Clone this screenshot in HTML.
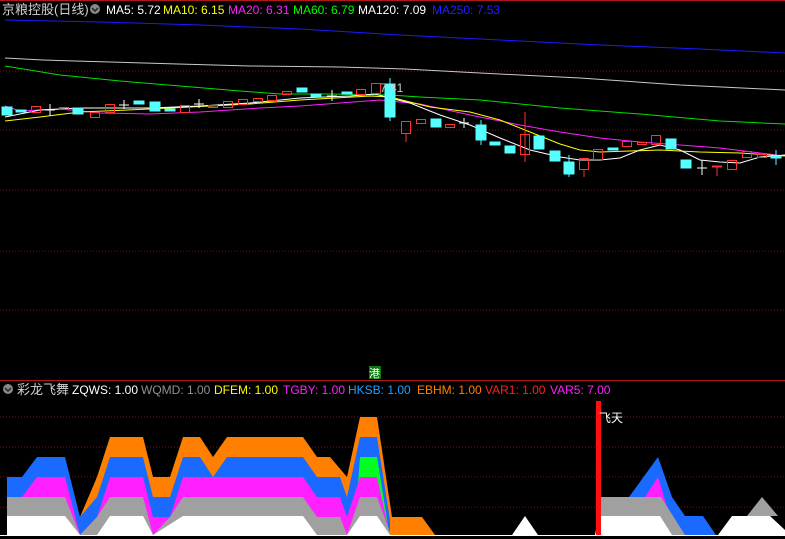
<!DOCTYPE html>
<html><head><meta charset="utf-8"><style>
html,body{margin:0;padding:0;background:#000;width:785px;height:539px;overflow:hidden}
svg{display:block}
text{font-family:"Liberation Sans","Noto Sans CJK SC",sans-serif;font-size:12px}
</style></head><body>
<svg width="785" height="539" viewBox="0 0 785 539" xmlns="http://www.w3.org/2000/svg">
<rect width="785" height="539" fill="#000"/>
<g stroke="#7a1010" stroke-width="1" stroke-dasharray="1,2">
<line x1="0" y1="71" x2="785" y2="71"/><line x1="0" y1="130" x2="785" y2="130"/>
<line x1="0" y1="190" x2="785" y2="190"/><line x1="0" y1="251" x2="785" y2="251"/>
<line x1="0" y1="310" x2="785" y2="310"/>
<line x1="0" y1="417" x2="785" y2="417"/><line x1="0" y1="447" x2="785" y2="447"/>
<line x1="0" y1="477" x2="785" y2="477"/><line x1="0" y1="507" x2="785" y2="507"/>
</g>
<line x1="0" y1="380.5" x2="785" y2="380.5" stroke="#b01818"/>
<line x1="0" y1="0.5" x2="785" y2="0.5" stroke="#b01818"/>
<g fill="none" stroke-width="1">
<polyline stroke="#1a1aff" points="5,20 100,22 200,25 300,29 400,35 500,40 600,45 700,49 785,53"/>
<polyline stroke="#c8c8c8" points="5,58 43,60 75,61 178,64 250,66 340,67 405,69 480,73 580,78 680,85 785,90"/>
<polyline stroke="#00e000" points="5,66 60,75 120,81 180,86 240,91 280,94 330,94 390,95 420,97 480,100 560,108 640,114 720,121 785,124"/>
<polyline stroke="#ff20ff" points="5,106 20,111 60,109 100,113 150,114 200,112 260,108 300,106 380,100 420,104 470,115 520,125 560,132 600,138 640,142 680,145 720,148 760,153 785,156"/>
<polyline stroke="#ffff00" points="5,121 40,117 80,112 150,109 250,104 300,100 370,96 390,97 430,107 470,112 500,120 530,132 560,144 580,150 600,152 630,151 660,150 700,152 740,153 785,156"/>
<polyline stroke="#ffffff" points="5,117 20,114 40,110 80,108 150,108 200,106 250,103 300,98 350,96 375,94 390,98 410,103 440,115 470,125 500,138 530,150 560,157 580,160 600,160 620,158 640,150 660,145 680,150 700,160 720,162 740,163 760,157 785,155"/>
</g>
<g stroke-width="1">
<!-- candles: cyan filled, red hollow -->
<g fill="#55ffff" stroke="#55ffff">
<rect x="2" y="107" width="10" height="8"/><rect x="16" y="110" width="10" height="2"/>
<rect x="73" y="108" width="10" height="6"/><rect x="134" y="101" width="10" height="3"/>
<rect x="150" y="102" width="10" height="9"/><rect x="165" y="109" width="10" height="2"/>
<rect x="297" y="88" width="10" height="4"/><rect x="311" y="94" width="10" height="3"/>
<rect x="342" y="92" width="10" height="2"/><rect x="385" y="84" width="10" height="33"/>
<rect x="431" y="119" width="10" height="8"/><rect x="476" y="125" width="10" height="15"/>
<rect x="490" y="142" width="10" height="3"/><rect x="505" y="146" width="10" height="7"/>
<rect x="534" y="136" width="10" height="13"/><rect x="550" y="151" width="10" height="10"/>
<rect x="564" y="162" width="10" height="12"/><rect x="608" y="148" width="10" height="2"/>
<rect x="666" y="139" width="10" height="10"/><rect x="681" y="160" width="10" height="8"/>
<rect x="771" y="156" width="10" height="2"/>
</g>
<g fill="none" stroke="#ff3232">
<rect x="31.5" y="106.5" width="9" height="6"/><rect x="59.5" y="107.5" width="9" height="2"/>
<rect x="90.5" y="112.5" width="9" height="5"/><rect x="105.5" y="104.5" width="9" height="8"/>
<rect x="180.5" y="105.5" width="9" height="7"/><rect x="208.5" y="105.5" width="9" height="2"/>
<rect x="223.5" y="101.5" width="9" height="6"/><rect x="238.5" y="99.5" width="9" height="5"/>
<rect x="253.5" y="98.5" width="9" height="3"/><rect x="267.5" y="95.5" width="9" height="5"/>
<rect x="282.5" y="91.5" width="9" height="3"/><rect x="356.5" y="89.5" width="9" height="5"/>
<rect x="371.5" y="83.5" width="9" height="10"/><rect x="401.5" y="121.5" width="9" height="12"/>
<rect x="416.5" y="119.5" width="9" height="4"/><rect x="445.5" y="124.5" width="9" height="3"/>
<rect x="520.5" y="134.5" width="9" height="20"/><rect x="579.5" y="158.5" width="9" height="11"/>
<rect x="593.5" y="149.5" width="9" height="10"/><rect x="622.5" y="141.5" width="9" height="5"/>
<rect x="637.5" y="142.5" width="9" height="2"/><rect x="651.5" y="135.5" width="9" height="9"/>
<rect x="712.5" y="166" width="9" height="1"/><rect x="727.5" y="160.5" width="9" height="9"/>
<rect x="742.5" y="151.5" width="9" height="6"/><rect x="757.5" y="154.5" width="9" height="3"/>
</g>
<g stroke="#ff3232"><line x1="525" y1="112" x2="525" y2="162"/><line x1="406" y1="133" x2="406" y2="142"/><line x1="584" y1="170" x2="584" y2="177"/><line x1="717" y1="166" x2="717" y2="176"/></g>
<g stroke="#55ffff"><line x1="390" y1="78" x2="390" y2="121"/><line x1="481" y1="120" x2="481" y2="145"/><line x1="569" y1="155" x2="569" y2="177"/><line x1="776" y1="150" x2="776" y2="165"/></g>
<g stroke="#fff"><path d="M45 110h10M50 104v12M119 105h10M124 100v9M194 104h10M199 99v9M327 96h10M332 90v11M459 123h10M464 118v10M697 168h10M702 160v15"/></g>
</g>
<text x="380" y="92" fill="#c8c8c8">7.41</text>
<!-- bottom area -->
<polygon fill="#ff8000" points="80,517 97,477 110,437 143,437 153,477 170,477 183,437 200,437 213,457 227,437 303,437 317,457 330,457 347,477 360,417 377,417 392,517 422,517 435,535 80,535"/>
<polygon fill="#1a6aff" points="7,477 22,477 37,457 65,457 80,517 97,497 110,457 143,457 153,497 170,497 183,457 200,457 213,477 227,457 303,457 317,477 340,477 347,497 360,437 377,437 390,520 390,535 7,535"/>
<polygon fill="#00ff20" points="360,457 377,457 388,525 355,525"/>
<polygon fill="#ff20ff" points="7,497 22,497 37,477 65,477 80,535 97,517 110,477 143,477 153,517 170,517 183,477 303,477 317,497 340,497 347,517 360,477 377,477 390,535 7,535"/>
<polygon fill="#a0a0a0" points="7,497 65,497 80,535 97,517 110,497 143,497 153,535 170,517 183,497 303,497 317,517 340,517 347,535 360,497 377,497 391,535 7,535"/>
<polygon fill="#fff" points="7,516 65,516 80,535 97,535 110,516 143,516 153,535 183,516 303,516 317,535 347,535 360,516 377,516 390,535 7,535"/>
<polygon fill="#1a6aff" points="629,497 658,457 672,497 685,516 703,516 716,535 629,535"/>
<polygon fill="#ff20ff" points="645,497 658,477 668,510 645,510"/>
<polygon fill="#a0a0a0" points="595,535 601,497 661,497 685,535"/>
<polygon fill="#fff" points="595,535 600,516 660,516 672,535"/>
<polygon fill="#fff" points="512,535 525,516 538,535"/>
<polygon fill="#a0a0a0" points="747,516 762,497 778,516"/>
<polygon fill="#fff" points="718,535 732,516 770,516 785,530 785,535"/>
<rect x="596" y="401" width="5" height="134" fill="#ff1010"/>
<text x="599" y="422" fill="#fff">飞天</text>
<line x1="0" y1="535.5" x2="785" y2="535.5" stroke="#fff"/>
<rect x="369" y="366" width="12" height="13" fill="#0a7a0a"/>
<text x="369" y="377" fill="#fff" style="font-size:11px">港</text>
<!-- headers -->
<text x="2" y="14" fill="#d0d0d0" style="font-size:13px">京粮控股(日线)</text>
<circle cx="95" cy="9" r="5" fill="#888"/><path d="M92 8l3 3 3-3" stroke="#222" fill="none" stroke-width="1.5"/>
<text y="14"><tspan x="106" fill="#fff">MA5: 5.72</tspan><tspan x="163" fill="#ffff00">MA10: 6.15</tspan><tspan x="228" fill="#ff20ff">MA20: 6.31</tspan><tspan x="293" fill="#00ff00">MA60: 6.79</tspan><tspan x="358" fill="#fff">MA120: 7.09</tspan><tspan x="432" fill="#2020ff">MA250: 7.53</tspan></text>
<circle cx="8" cy="389" r="5" fill="#888"/><path d="M5 388l3 3 3-3" stroke="#222" fill="none" stroke-width="1.5"/>
<text x="17" y="394" fill="#d0d0d0" style="font-size:13px">彩龙飞舞</text>
<text y="394"><tspan x="72" fill="#fff">ZQWS: 1.00</tspan><tspan x="141" fill="#909090">WQMD: 1.00</tspan><tspan x="214" fill="#ffff00">DFEM: 1.00</tspan><tspan x="283" fill="#ff20ff">TGBY: 1.00</tspan><tspan x="348" fill="#20a0ff">HKSB: 1.00</tspan><tspan x="417" fill="#ff8000">EBHM: 1.00</tspan><tspan x="485" fill="#ff2020">VAR1: 1.00</tspan><tspan x="550" fill="#ff20ff">VAR5: 7.00</tspan></text>
</svg>
</body></html>
